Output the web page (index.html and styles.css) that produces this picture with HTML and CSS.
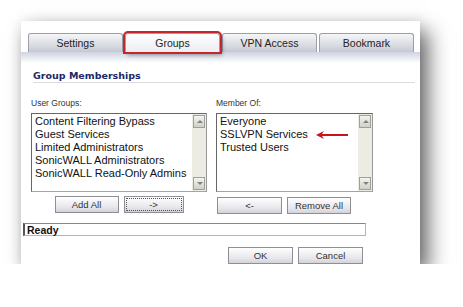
FILE: index.html
```html
<!DOCTYPE html>
<html lang="en">
<head>
<meta charset="UTF-8" />
<title>Edit User - Groups</title>
<link rel="stylesheet" href="styles.css">
</head>
<body>

<div class="window">
  <!-- tabs -->
  <div class="tabs">
    <div class="tab">Settings</div>
    <div class="tab active">Groups</div>
    <div class="tab">VPN Access</div>
    <div class="tab">Bookmark</div>
  </div>
  <div class="tab-band"></div>

  <div class="content">
    <h2 class="section-title">Group Memberships</h2>

    <div class="columns">
      <div class="col col-left">
        <div class="label">User Groups:</div>
        <div class="listbox">
          <ul class="items">
            <li>Content Filtering Bypass</li>
            <li>Guest Services</li>
            <li>Limited Administrators</li>
            <li>SonicWALL Administrators</li>
            <li>SonicWALL Read-Only Admins</li>
          </ul>
          <div class="scrollbar">
            <span class="sb-btn up"></span>
            <span class="sb-btn down"></span>
          </div>
        </div>
        <div class="btn-row center">
          <button class="btn w64">Add All</button>
          <button class="btn w60 focus">-&gt;</button>
        </div>
      </div>

      <div class="col col-right">
        <div class="label">Member Of:</div>
        <div class="listbox">
          <ul class="items">
            <li>Everyone</li>
            <li class="marked">SSLVPN Services
              <svg class="arrow" width="32" height="8" viewBox="0 0 32 8">
                <path d="M0 4 L8 0 L6 3 L32 3 L32 5 L6 5 L8 8 Z" fill="#c4161c"/>
              </svg>
            </li>
            <li>Trusted Users</li>
          </ul>
          <div class="scrollbar">
            <span class="sb-btn up"></span>
            <span class="sb-btn down"></span>
          </div>
        </div>
        <div class="btn-row low">
          <button class="btn w65">&lt;-</button>
          <button class="btn w64">Remove All</button>
        </div>
      </div>
    </div>
  </div>

  <div class="status">Ready</div>

  <div class="footer">
    <button class="btn w65">OK</button>
    <button class="btn w65">Cancel</button>
  </div>
</div>

</body>
</html>
```

FILE: styles.css
```css
body {
  margin: 0;
  padding: 21px 0 0 21px;
  background: #fff;
  font-family: "Liberation Sans", Arial, sans-serif;
}

.window {
  width: 399px;
  height: 243px;
  background: #fff;
  box-shadow: 8px 10px 20px rgba(0,0,0,0.6), 0 0 12px rgba(0,0,0,0.08);
}

/* tabs */
.tabs {
  display: flex;
  gap: 2px;
  padding: 12px 0 0 7px;
  height: 19px;
}
.tab {
  width: 93px;
  height: 18px;
  border: 1px solid #9c9ea8;
  border-bottom: none;
  border-radius: 3px 3px 0 0;
  background: linear-gradient(#f6f6f8, #d6d8e0 70%, #c4c6d2);
  font-size: 10.5px;
  color: #222;
  text-align: center;
  line-height: 18px;
}
.tab.active {
  background: linear-gradient(#fdfdfe, #eceef2);
  outline: 2px solid #c3262d;
  outline-offset: 0;
  box-shadow: 2px 3px 4px rgba(0,0,0,0.35);
  position: relative;
}
.tab-band {
  height: 11px;
  background: linear-gradient(#cfd3e2, #fff);
}

.content {
  padding: 0 5px 0 10px;
}
.section-title {
  margin: 0 0 0 2px;
  padding-top: 6px;
  font-family: "DejaVu Sans", Verdana, sans-serif;
  font-size: 9.5px;
  font-weight: bold;
  line-height: 13px;
  color: #202868;
  border-bottom: 1px solid #dcdcdc;
}

.columns {
  display: flex;
  gap: 9px;
}
.col-left { width: 176px; }
.col-right { width: 157px; }

.label {
  margin-top: 15px;
  font-size: 8.5px;
  line-height: 11px;
  color: #333;
}
.listbox {
  margin-top: 4px;
  height: 77px;
  border: 1px solid #666;
  border-right-color: #999;
  border-bottom-color: #a4a4a4;
  display: flex;
  background: #fff;
}
.items {
  flex: 1;
  list-style: none;
  margin: 0;
  padding: 1px 0 0 3px;
  font-size: 11px;
  line-height: 13px;
  color: #111;
}
.items li { white-space: nowrap; }
.marked { position: relative; }
.arrow {
  position: absolute;
  left: 96px;
  top: 3px;
}

.scrollbar {
  width: 12px;
  background: #ecebe4;
  display: flex;
  flex-direction: column;
  justify-content: space-between;
  padding: 1px;
}
.sb-btn {
  height: 11px;
  border: 1px solid #a0a09a;
  background: linear-gradient(#f4f4f0, #d0d0c8);
  position: relative;
}
.sb-btn::after {
  content: "";
  position: absolute;
  left: 3px;
  top: 4px;
  border-left: 3px solid transparent;
  border-right: 3px solid transparent;
}
.sb-btn.up::after { border-bottom: 3px solid #808080; }
.sb-btn.down::after { border-top: 3px solid #808080; }

/* buttons */
.btn-row {
  display: flex;
  gap: 5px;
  margin-top: 4px;
}
.btn-row.center { justify-content: center; }
.btn-row.low { margin-top: 5px; padding-left: 1px; }
.btn {
  height: 17px;
  padding: 0;
  border: 1px solid #8e8e96;
  background: linear-gradient(#ffffff, #e6e6ea 70%, #d2d2d8);
  font-family: "Liberation Sans", Arial, sans-serif;
  font-size: 9.5px;
  color: #333;
  line-height: 15px;
}
.btn.focus {
  outline: 1px dotted #555;
  outline-offset: -3px;
}
.w60 { width: 60px; }
.w64 { width: 64px; }
.w65 { width: 65px; }

.status {
  margin: 9px 0 0 2px;
  width: 338px;
  height: 11px;
  border: 1px solid #b4b4b4;
  border-left: 2px solid #555;
  border-top-color: #888;
  padding-left: 2px;
  font-size: 10.5px;
  font-weight: bold;
  line-height: 12px;
  color: #111;
}

.footer {
  display: flex;
  justify-content: flex-end;
  gap: 5px;
  margin-top: 11px;
  width: 342px;
}
```
